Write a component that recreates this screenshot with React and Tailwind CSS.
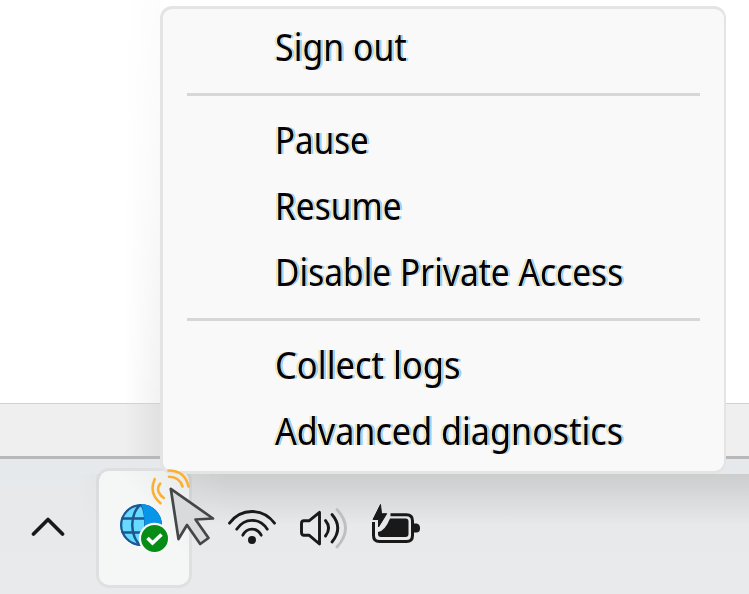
const textShadow = "[text-shadow:-2.5px_0_0_#fae3a6,2.5px_0_0_#93d4ff]";

function MenuItem({ children, fit }) {
  return (
    <div className="flex h-[66px] items-center pl-[112px]">
      <span className={`mb-[3px] origin-left whitespace-nowrap text-[37.5px] leading-[63px] text-[#08000c] ${textShadow} ${fit}`}>
        {children}
      </span>
    </div>
  );
}

function Separator() {
  return <div className="mr-6 ml-6 my-3 h-[3px] bg-[#d7d7d7]" />;
}

function Globe() {
  return (
    <svg className="h-[50px] w-[50px]" viewBox="0 0 50 50" fill="none">
      <defs>
        <clipPath id="globe"><circle cx="21" cy="21" r="21" /></clipPath>
      </defs>
      <g clipPath="url(#globe)">
        <rect width="43" height="43" fill="#66dbff" />
        <g stroke="#1f5590" strokeWidth="2.500">
          <path d="M0 14.500H26M0 28.500H30" />
          <path d="M22 0C9 7 9 35 22 42" />
          <path d="M21 0C27 8 27 34 20 42" />
          <circle cx="21" cy="21" r="20" />
        </g>
        <path d="M21 0H43V21H24.500C24.500 13 24 6 21 0Z" fill="#0795e9" />
      </g>
      <circle cx="34.500" cy="34.500" r="15.700" fill="#f7f8f8" />
      <circle cx="34.500" cy="34.500" r="13.500" fill="#078c18" />
      <path d="M27.500 34L32.500 39L41.500 30.500" stroke="white" strokeWidth="3.600" />
    </svg>
  );
}

function Wifi() {
  return (
    <svg className="h-[36px] w-[50px]" viewBox="0 0 50 36" fill="none" stroke="#191919" strokeWidth="2.800" strokeLinecap="round">
      <path d="M2.500 15.200C14 -.4 36 -.4 47.500 15.200M9.700 21.200C17.500 9.300 32.500 9.300 40.300 21.200M15.800 27.200C20 19 30 19 34.200 27.200" />
      <circle cx="25" cy="32" r="4" fill="#191919" stroke="none" />
    </svg>
  );
}

function Volume() {
  return (
    <svg className="h-[42px] w-[50px]" viewBox="0 0 50 42" fill="none" stroke="#191919" strokeWidth="2.900" strokeLinecap="round" strokeLinejoin="round">
      <path d="M21.500 5.300V37L11 28.200H6Q3.500 28.200 3.500 25.500V16.500Q3.500 13.800 6 13.800H11Z" />
      <path d="M27.500 13.500Q33.700 21 27.500 29M34 7.500Q45.500 21 34 35" />
      <path d="M39 2.500Q56 21 39 40" stroke="#bdbfc0" />
    </svg>
  );
}

function Battery() {
  return (
    <svg className="h-[40px] w-[50px]" viewBox="0 0 50 40" fill="none">
      <path d="M18.500 10.700H34.500Q40.500 10.700 40.500 16.700V31.500Q40.500 37.500 34.500 37.500H7.500Q1.500 37.500 1.500 31.500V18" stroke="#191919" strokeWidth="3" />
      <path d="M18 14.500H33.500Q36.500 14.500 36.500 17.500V30Q36.500 33 33.500 33H9Q6 33 6 30V28Q13 27 18 14.500Z" fill="#191919" />
      <path d="M41.500 19.500H44.500Q48 20 48 24.200Q48 28.500 44.500 28.500H41.500Z" fill="#191919" />
      <path d="M8.500 .5L1 15.500H6.500L6.500 23L14.700 9.700H9.500Z" fill="#191919" stroke="#191919" strokeWidth="1" strokeLinejoin="round" />
    </svg>
  );
}

function Pointer() {
  return (
    <svg className="absolute top-[465px] left-[148px] h-[86px] w-[72px]" viewBox="0 0 72 86" fill="none">
      <g stroke="#fbb034" strokeWidth="2.600" strokeLinecap="round">
        <path d="M6.700 14.200Q.5 28 12.500 38.200M12.200 18.500Q6.500 26 15.800 33M20.500 5.500Q37 5.500 40.500 21.500M21 11.800Q31.500 12 34.500 21.500" />
      </g>
      <path d="M22.800 23.800L65 53.500L47.500 54.500L60.500 73L52.200 79L39 60L30.500 74Z" fill="#d9dadb" stroke="#444747" strokeWidth="2.700" strokeLinejoin="round" />
    </svg>
  );
}

export default function App() {
  return (
    <div className="relative flex h-[594px] w-[749px] flex-col overflow-hidden bg-white font-['Noto_Sans','Open_Sans',sans-serif]">
      <div className="flex h-[403px]">
        <div className="w-[160px] bg-linear-to-r from-white from-78% to-[#f2f2f2] [mask-image:linear-gradient(rgb(0_0_0/.2),rgb(0_0_0/.5)_50%,#000)]" />
      </div>
      <div className="h-[56px] border-t border-b-[3px] border-t-[#d2d2d2] border-b-[#b8b8b8] bg-[#efefef]">
        <div className="h-full w-[160px] bg-linear-to-r from-[#efefef] from-78% to-[#e1e1e1]" />
      </div>
      <div className="flex h-[135px] items-start bg-linear-to-b from-[#e6e9eb] via-[#e8e9eb] to-[#e9eaec]">
        <div className="mt-[15px] h-[120px] w-full bg-[linear-gradient(90deg,transparent_80px,#cbcccc_230px)] [mask-image:linear-gradient(#000,transparent_50px)]" />
      </div>

      <div className="absolute inset-x-0 bottom-0 flex h-[126px] items-start">
        <svg className="mt-[48px] ml-[31px] h-[20px] w-[34px]" viewBox="0 0 34 20" fill="none" stroke="#191919" strokeWidth="3.700" strokeLinecap="round" strokeLinejoin="round">
          <path d="M2.500 18L17 3.500L31.500 18" />
        </svg>
        <div className="ml-[31px] h-[120px] w-[96px] rounded-[13px] border-[3px] border-black/4 bg-linear-to-bl from-[#e9eaea] to-[#f5f6f6] to-40% bg-clip-padding pt-[33px] pl-[21px]">
          <Globe />
        </div>
        <div className="mt-[40px] ml-[35px]"><Wifi /></div>
        <div className="mt-[39px] ml-[21px]"><Volume /></div>
        <div className="mt-[36px] ml-[24px]"><Battery /></div>
      </div>

      <div className="absolute top-[6px] left-[160px] h-[468px] w-[566px] rounded-[12px] border-[3px] border-r-2 border-[#e4e4e4] bg-[#f9f9f9] py-[6px]">
        <MenuItem fit="scale-x-[0.905]">Sign out</MenuItem>
        <Separator />
        <MenuItem fit="scale-x-[0.885]">Pause</MenuItem>
        <MenuItem fit="scale-x-[0.893]">Resume</MenuItem>
        <MenuItem fit="scale-x-[0.895]">Disable Private Access</MenuItem>
        <Separator />
        <MenuItem fit="scale-x-[0.921]">Collect logs</MenuItem>
        <MenuItem fit="scale-x-[0.911]">Advanced diagnostics</MenuItem>
      </div>
      <Pointer />
    </div>
  );
}
